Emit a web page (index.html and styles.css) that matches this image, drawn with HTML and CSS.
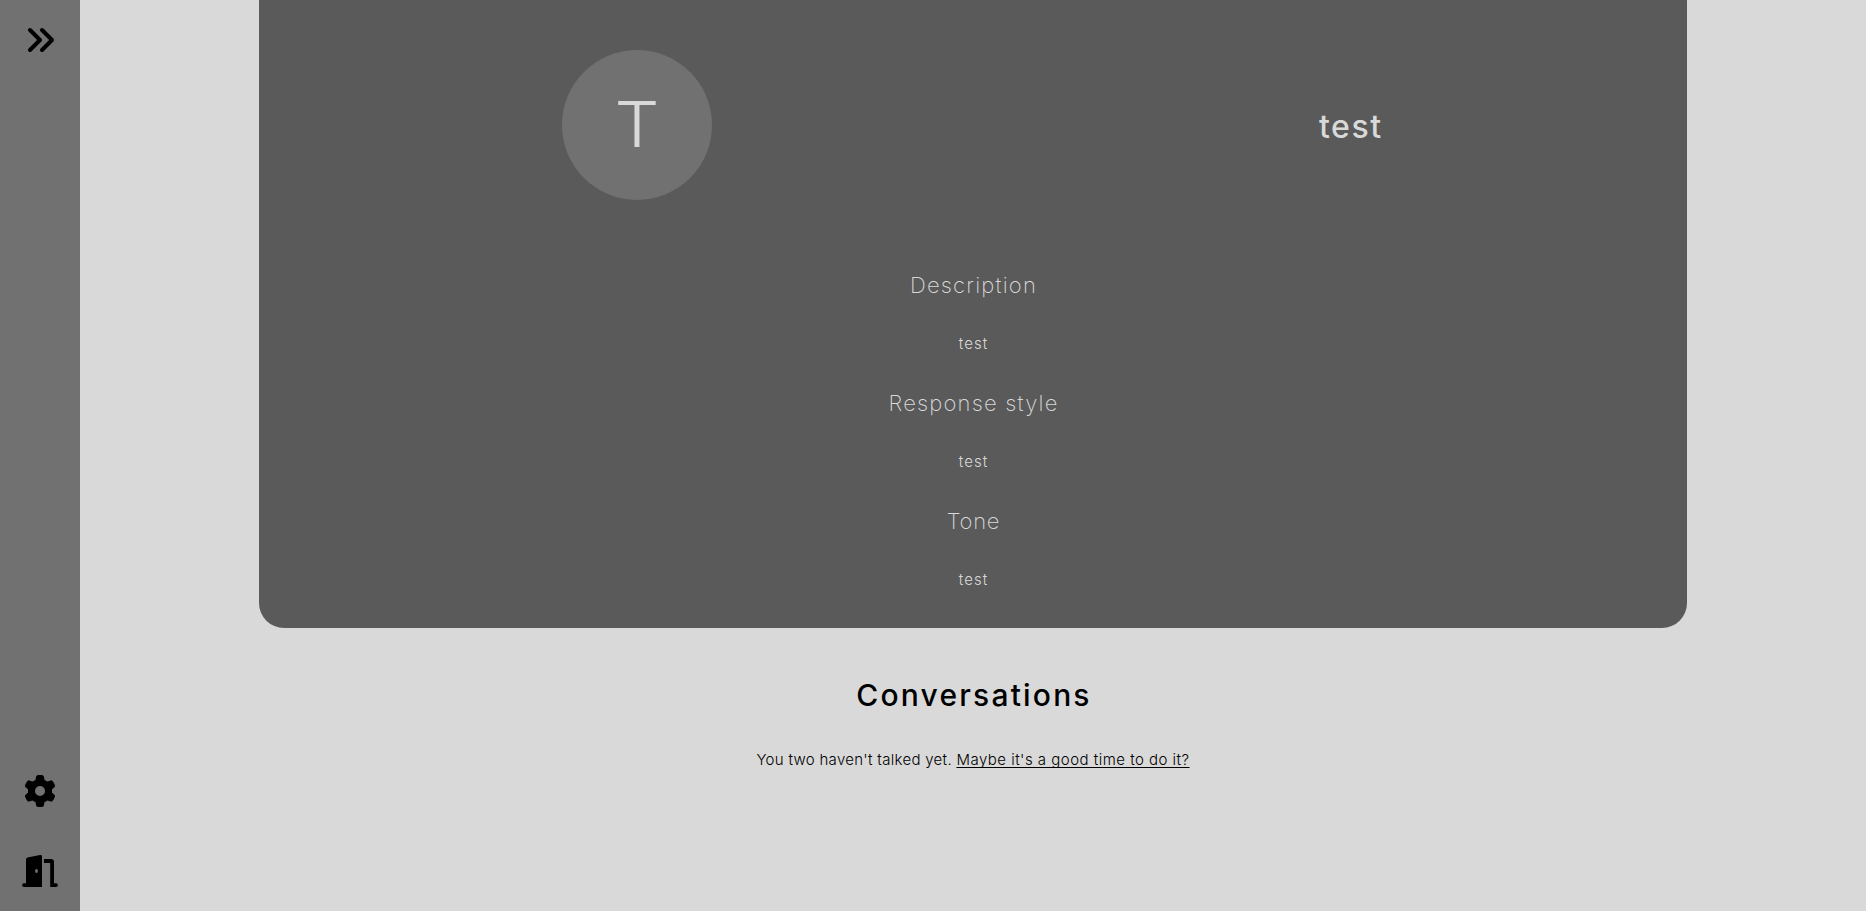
FILE: index.html
```html
<!DOCTYPE html>
<html lang="en">
<head>
<meta charset="utf-8">
<title>test</title>
<link rel="stylesheet" href="styles.css">
</head>
<body>
<nav class="sidebar">
  <a class="nav-item"><svg class="icon" viewBox="0 0 80 80"><path class="stroke" d="M30 30l10 10-10 10M42 30l10 10-10 10"/></svg></a>
  <div class="nav-bottom">
    <a class="nav-item"><svg class="icon" viewBox="0 0 80 80"><g transform="translate(24 24) scale(.0625)"><path d="M495.9 166.6c3.2 8.7 .5 18.4-6.4 24.6l-43.300 39.4c1.1 8.3 1.7 16.800 1.7 25.400s-.6 17.100-1.700 25.400l43.300 39.400c6.900 6.200 9.600 15.900 6.400 24.600c-4.400 11.900-9.700 23.300-15.800 34.300l-4.700 8.100c-6.600 11-14 21.400-22.100 31.200c-5.900 7.200-15.700 9.600-24.500 6.800l-55.700-17.700c-13.400 10.300-28.200 18.900-44 25.400l-12.500 57.100c-2 9.100-9 16.300-18.200 17.800c-13.800 2.300-28 3.500-42.500 3.500s-28.700-1.200-42.500-3.500c-9.200-1.500-16.200-8.700-18.200-17.800l-12.500-57.100c-15.800-6.500-30.600-15.100-44-25.400L83.100 425.900c-8.800 2.800-18.600 .3-24.500-6.800c-8.100-9.800-15.500-20.200-22.100-31.200l-4.700-8.100c-6.100-11-11.400-22.400-15.800-34.300c-3.200-8.700-.5-18.400 6.400-24.600l43.300-39.400C64.600 273.100 64 264.600 64 256s.6-17.100 1.700-25.400L22.400 191.200c-6.900-6.200-9.600-15.900-6.400-24.600c4.400-11.900 9.700-23.300 15.800-34.300l4.700-8.100c6.600-11 14-21.400 22.100-31.200c5.900-7.200 15.700-9.600 24.500-6.800l55.700 17.700c13.400-10.300 28.200-18.900 44-25.400l12.500-57.100c2-9.100 9-16.300 18.200-17.800C227.300 1.200 241.500 0 256 0s28.700 1.200 42.500 3.500c9.200 1.500 16.200 8.700 18.200 17.800l12.500 57.100c15.800 6.500 30.600 15.100 44 25.400l55.700-17.700c8.800-2.800 18.600-.3 24.500 6.800c8.100 9.800 15.500 20.200 22.100 31.200l4.700 8.100c6.100 11 11.400 22.400 15.800 34.300zM256 336a80 80 0 1 0 0-160 80 80 0 1 0 0 160z"/></g></svg></a>
    <a class="nav-item"><svg class="icon" viewBox="0 0 80 80"><path fill-rule="evenodd" d="M26 52.200V28.500Q26 27 27.500 26.500L40 24.100Q42 23.700 42 25.500V56H24A1.900 1.900 0 0 1 24 52.200ZM36.500 38a1.400 2 0 1 0 0 4 1.400 2 0 1 0 0-4ZM44 28H51Q54 28 54 31V52.200H56A1.900 1.900 0 0 1 56 56H50.200V31.900H44Z"/></svg></a>
  </div>
</nav>
<main class="main">
  <section class="card">
    <header class="profile">
      <div class="avatar"><span class="initial">T</span></div>
      <h1 class="name">test</h1>
    </header>
    <div class="details">
      <h2 class="label">Description</h2>
      <p class="value">test</p>
      <h2 class="label">Response style</h2>
      <p class="value">test</p>
      <h2 class="label label-short">Tone</h2>
      <p class="value">test</p>
    </div>
  </section>
  <section class="conversations">
    <h2 class="title">Conversations</h2>
    <p class="empty"><span>You two haven't talked yet. </span><a class="link">Maybe it's a good time to do it?</a></p>
  </section>
</main>
</body>
</html>
```
FILE: styles.css
```css
* { box-sizing: border-box; margin: 0; padding: 0; }
body {
  display: flex;
  height: 911px;
  overflow: hidden;
  background: #d9d9d9;
  color: #000;
  font-family: Inter, "Liberation Sans", sans-serif;
}
.sidebar {
  display: flex;
  flex-direction: column;
  justify-content: space-between;
  flex: 0 0 80px;
  background: #717171;
}
.nav-item, .icon { display: block; width: 80px; height: 80px; }
.stroke { fill: none; stroke: #000; stroke-width: 4; stroke-linecap: round; stroke-linejoin: round; }
.main { display: flex; flex: 1; flex-direction: column; align-items: center; }
.card {
  width: 80%;
  height: 628px;
  padding-top: 50px;
  border-radius: 0 0 25px 25px;
  background: #5a5a5a;
  color: #d9d9d9;
}
.profile { display: flex; align-items: center; justify-content: space-around; height: 150px; }
.avatar {
  width: 150px;
  height: 150px;
  border-radius: 50%;
  background: #717171;
  font-size: 63px;
  font-weight: 300;
  line-height: 148px;
  text-align: center;
}
.initial { display: inline-block; transform: scaleX(1.12); }
.name { width: 65px; padding-top: 3px; font-size: 32px; font-weight: 500; line-height: 40px; letter-spacing: 1.6px; }
.details { display: flex; flex-direction: column; align-items: center; gap: 29px; padding-top: 65px; }
.label { margin-right: -1px; font-size: 22px; font-weight: 200; line-height: 40px; letter-spacing: 1.2px; }
.label-short { letter-spacing: 0.8px; }
.value { margin-right: -1px; font-size: 15px; font-weight: 300; line-height: 20px; letter-spacing: 1px; }
.conversations { display: flex; flex-direction: column; align-items: center; padding-top: 47px; }
.title { margin-right: -2px; font-size: 30px; font-weight: 500; line-height: 40px; letter-spacing: 2.2px; }
.empty { margin-top: 35px; font-size: 15px; font-weight: 300; line-height: 20px; letter-spacing: 0.3px; white-space: pre; }
.link { letter-spacing: 0.48px; text-decoration: underline; text-underline-offset: 2px; text-decoration-skip-ink: none; }
```
